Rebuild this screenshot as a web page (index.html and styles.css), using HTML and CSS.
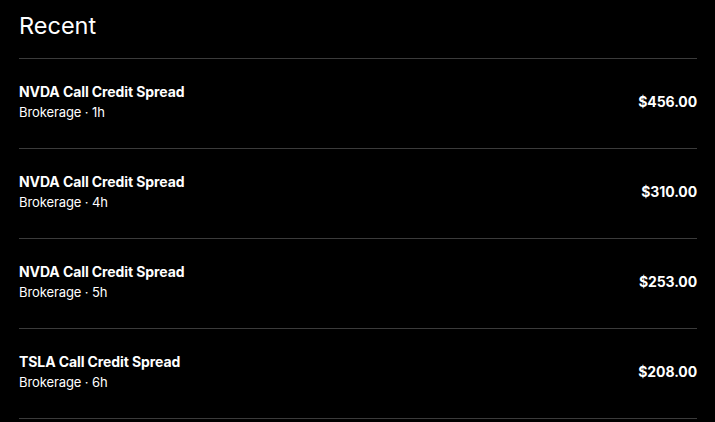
FILE: index.html
```html
<!DOCTYPE html>
<html>
<head>
<meta charset="utf-8">
<link rel="stylesheet" href="styles.css">
</head>
<body>
<div class="panel">
  <h1 class="heading">Recent</h1>
  <ul class="list">
    <li class="row">
      <div class="info">
        <div class="name">NVDA Call Credit Spread</div>
        <div class="meta">Brokerage · 1h</div>
      </div>
      <div class="amount">$456.00</div>
    </li>
    <li class="row">
      <div class="info">
        <div class="name">NVDA Call Credit Spread</div>
        <div class="meta">Brokerage · 4h</div>
      </div>
      <div class="amount">$310.00</div>
    </li>
    <li class="row">
      <div class="info">
        <div class="name">NVDA Call Credit Spread</div>
        <div class="meta">Brokerage · 5h</div>
      </div>
      <div class="amount">$253.00</div>
    </li>
    <li class="row">
      <div class="info">
        <div class="name">TSLA Call Credit Spread</div>
        <div class="meta">Brokerage · 6h</div>
      </div>
      <div class="amount">$208.00</div>
    </li>
  </ul>
</div>
</body>
</html>
```

FILE: styles.css
```css
html, body {
  margin: 0;
  padding: 0;
  background: #000;
  color: #fff;
  font-family: Inter, "Noto Sans", sans-serif;
}
.panel {
  padding: 0 18px 0 19px;
}
.heading {
  margin: 0;
  height: 59px;
  box-sizing: border-box;
  padding-top: 11px;
  font-size: 23.5px;
  line-height: 30px;
  font-weight: 400;
  border-bottom: 1px solid #3b3b3b;
}
.list {
  list-style: none;
  margin: 0;
  padding: 0;
}
.row {
  display: flex;
  align-items: center;
  justify-content: space-between;
  height: 89px;
  border-bottom: 1px solid #3b3b3b;
}
.info {
  display: flex;
  flex-direction: column;
  padding-bottom: 3px;
}
.name {
  font-size: 14px;
  line-height: 20px;
  font-weight: 700;
  letter-spacing: -0.1px;
}
.meta {
  font-size: 13px;
  line-height: 20px;
  color: #fff;
  letter-spacing: -0.1px;
}
.amount {
  font-size: 14px;
  font-weight: 700;
  letter-spacing: -0.1px;
  padding-bottom: 4px;
}
```
